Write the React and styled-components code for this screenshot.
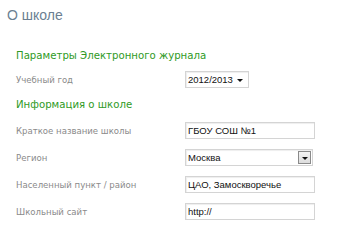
import React from 'react'
import styled, { createGlobalStyle } from 'styled-components'

const GlobalStyle = createGlobalStyle`
  body {
    margin: 0;
    background: #fff;
    font-family: "DejaVu Sans Condensed", "DejaVu Sans", sans-serif;
  }
`;

const Page = styled.div`
  width: 347px;
  height: 232px;
  overflow: hidden;
`;

const Title = styled.h1`
  margin: 0;
  padding: 6px 7px 0;
  height: 43px;
  box-sizing: border-box;
  font-family: "Liberation Sans", Arial, sans-serif;
  font-weight: normal;
  font-size: 14px;
  line-height: 18px;
  color: #6b7f92;
`;

const Form = styled.div`
  padding-left: 16px;
`;

const Heading = styled.div`
  height: ${p => p.$h}px;
  display: flex;
  align-items: center;
  font-family: "DejaVu Sans Condensed", "DejaVu Sans", sans-serif;
  font-stretch: condensed;
  font-size: 11.3px;
  color: #2f9a25;
`;

const Row = styled.div`
  display: grid;
  grid-template-columns: 169px auto;
  align-items: center;
  height: ${p => p.$h}px;
`;

const Label = styled.span`
  font-family: "DejaVu Sans Condensed", "DejaVu Sans", sans-serif;
  font-stretch: condensed;
  font-size: 9.5px;
  color: #8a8a8a;
`;

const Field = styled.div`
  width: ${p => p.$w}px;
  height: 17px;
  box-sizing: border-box;
  border: 1px solid #d4d4d4;
  box-shadow: inset 1px 1px 1px #eee;
  display: flex;
  align-items: center;
  padding-left: 2px;
  font-family: "Liberation Sans", Arial, sans-serif;
  font-size: 9.5px;
  color: #111;
  background: #fff;
`;

const Value = styled.span`
  flex: 1;
`;

const Arrow = styled.span`
  width: 0;
  height: 0;
  border-left: 3px solid transparent;
  border-right: 3px solid transparent;
  border-top: 3px solid #111;
  margin-right: 5px;
  margin-top: 2px;
`;

const DropButton = styled.span`
  width: 13px;
  height: 13px;
  box-sizing: border-box;
  margin-right: 1px;
  border: 1px solid #8a8a8a;
  background: linear-gradient(#f4f4f4, #dcdcdc);
  display: flex;
  align-items: center;
  justify-content: center;

  &::after {
    content: '';
    margin-top: 2px;
    border-left: 3px solid transparent;
    border-right: 3px solid transparent;
    border-top: 3px solid #111;
  }
`;

const App = () => {
  return (
    <Page>
      <GlobalStyle />
      <Title>О школе</Title>
      <Form>
        <Heading $h={24}>Параметры Электронного журнала</Heading>
        <Row $h={24}>
          <Label>Учебный год</Label>
          <Field $w={64}>
            <Value>2012/2013</Value>
            <Arrow />
          </Field>
        </Row>
        <Heading $h={26}>Информация о школе</Heading>
        <Row $h={27}>
          <Label>Краткое название школы</Label>
          <Field $w={130}><Value>ГБОУ СОШ №1</Value></Field>
        </Row>
        <Row $h={27}>
          <Label>Регион</Label>
          <Field $w={128}>
            <Value>Москва</Value>
            <DropButton />
          </Field>
        </Row>
        <Row $h={27}>
          <Label>Населенный пункт / район</Label>
          <Field $w={130}><Value>ЦАО, Замоскворечье</Value></Field>
        </Row>
        <Row $h={27}>
          <Label>Школьный сайт</Label>
          <Field $w={130}><Value>http://</Value></Field>
        </Row>
      </Form>
    </Page>
  )
}

export default App
